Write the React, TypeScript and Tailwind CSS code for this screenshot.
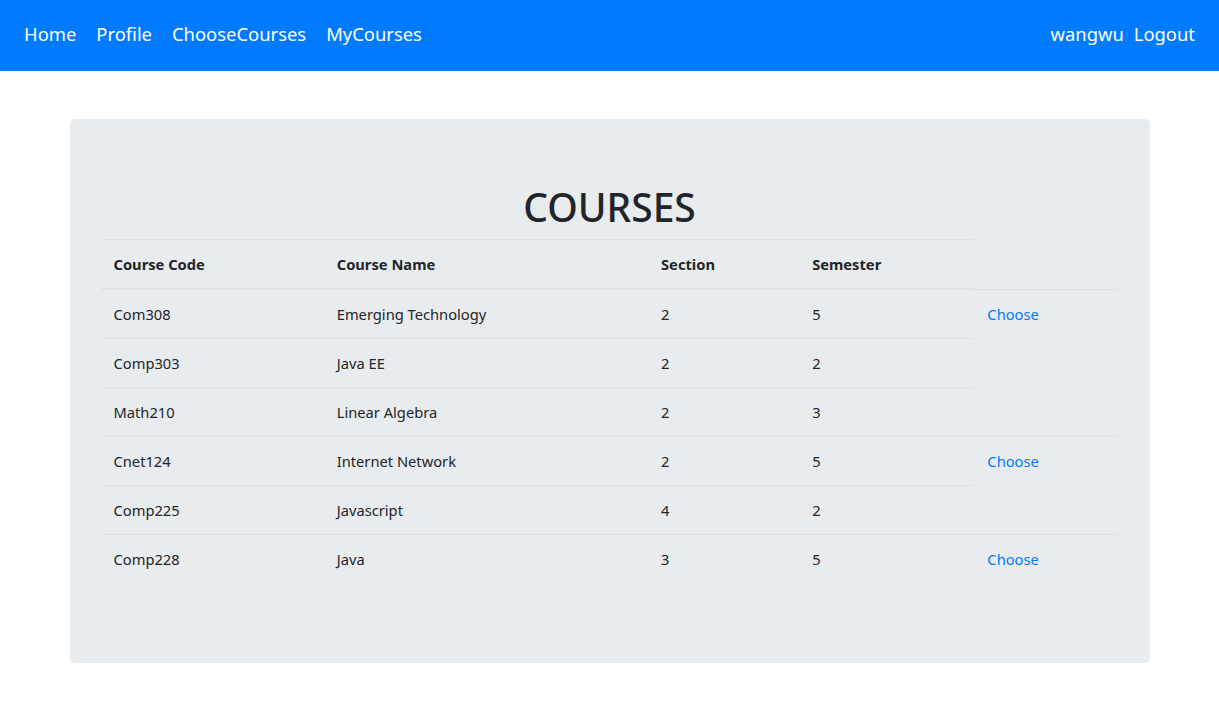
import React from "react";

type Course = {
  code: string;
  name: string;
  section: number;
  semester: number;
  choosable: boolean;
};

const courses: Course[] = [
  { code: "Com308", name: "Emerging Technology", section: 2, semester: 5, choosable: true },
  { code: "Comp303", name: "Java EE", section: 2, semester: 2, choosable: false },
  { code: "Math210", name: "Linear Algebra", section: 2, semester: 3, choosable: false },
  { code: "Cnet124", name: "Internet Network", section: 2, semester: 5, choosable: true },
  { code: "Comp225", name: "Javascript", section: 4, semester: 2, choosable: false },
  { code: "Comp228", name: "Java", section: 3, semester: 5, choosable: true },
];

function App() {
  return (
    <div className="min-h-screen bg-white text-[#212529] font-['Noto_Sans','Open_Sans',sans-serif]">
      {/* barre de navigation */}
      <nav className="h-[71px] bg-[#007bff] flex items-center justify-between px-[24px] pb-[4px] text-white text-[18.4px]">
        <div className="flex gap-[20px]">
          <a href="#">Home</a>
          <a href="#">Profile</a>
          <a href="#">ChooseCourses</a>
          <a href="#">MyCourses</a>
        </div>
        <div className="flex gap-[10px]">
          <span>wangwu</span>
          <a href="#">Logout</a>
        </div>
      </nav>

      {/* jumbotron */}
      <div className="w-[1080px] mx-auto mt-[48px] bg-[#e9ecef] rounded-[5px] px-[32px] pt-[64px] pb-[64px]">
        <h1 className="text-center text-[39px] leading-[48px] font-medium mb-[8px]">COURSES</h1>
        <table className="w-full table-fixed border-collapse text-[14.7px] mb-[16px]">
          <colgroup>
            <col className="w-[223px]" />
            <col className="w-[324px]" />
            <col className="w-[151px]" />
            <col className="w-[175px]" />
            <col className="w-[142px]" />
          </colgroup>
          <thead>
            <tr>
              <th className="text-left font-bold px-[12px] py-[12px] leading-[24px] border-t border-b-2 border-[#dee2e6]">Course Code</th>
              <th className="text-left font-bold px-[12px] py-[12px] leading-[24px] border-t border-b-2 border-[#dee2e6]">Course Name</th>
              <th className="text-left font-bold px-[12px] py-[12px] leading-[24px] border-t border-b-2 border-[#dee2e6]">Section</th>
              <th className="text-left font-bold px-[12px] py-[12px] leading-[24px] border-t border-b-2 border-[#dee2e6]">Semester</th>
            </tr>
          </thead>
          <tbody>
            {courses.map((c) => (
              <tr key={c.code}>
                <td className="px-[12px] py-[12px] leading-[24px] border-t border-[#dee2e6]">{c.code}</td>
                <td className="px-[12px] py-[12px] leading-[24px] border-t border-[#dee2e6]">{c.name}</td>
                <td className="px-[12px] py-[12px] leading-[24px] border-t border-[#dee2e6]">{c.section}</td>
                <td className="px-[12px] py-[12px] leading-[24px] border-t border-[#dee2e6]">{c.semester}</td>
                {c.choosable && (
                  <td className="px-[12px] py-[12px] leading-[24px] border-t border-[#dee2e6]">
                    <a href="#" className="text-[#007bff]">Choose</a>
                  </td>
                )}
              </tr>
            ))}
          </tbody>
        </table>
      </div>
    </div>
  );
}

export default App;
